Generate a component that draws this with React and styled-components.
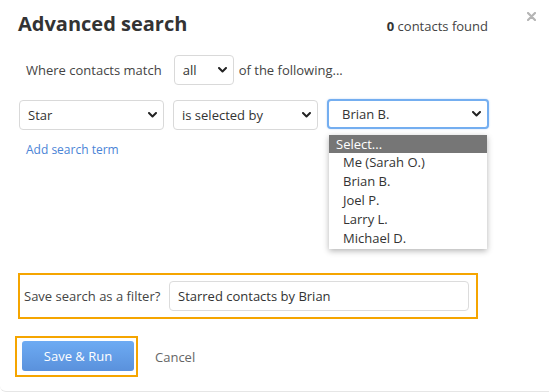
import React from 'react'
import styled, { createGlobalStyle } from 'styled-components'

const GlobalStyle = createGlobalStyle`
  html, body {
    margin: 0;
    padding: 0;
    background: #fff;
  }
  body {
    font-family: "Open Sans", "Liberation Sans", sans-serif;
    color: #444;
  }
  * { box-sizing: border-box; }
`

const people = ['Me (Sarah O.)', 'Brian B.', 'Joel P.', 'Larry L.', 'Michael D.']

const Chevron = () => (
  <svg width="9" height="6" viewBox="0 0 9 6">
    <path d="M1 1 L4.5 4.5 L8 1" fill="none" stroke="#222" strokeWidth="2" strokeLinecap="round" strokeLinejoin="round"/>
  </svg>
)

const CloseIcon = () => (
  <svg width="9" height="9" viewBox="0 0 9 9">
    <path d="M1 1 L8 8 M8 1 L1 8" stroke="#b5b5b5" strokeWidth="2.2" strokeLinecap="round"/>
  </svg>
)

const App = () => {
  return (
    <Modal>
      <GlobalStyle/>
      <Header>
        <Title>Advanced search</Title>
        <Count><b>0</b> contacts found</Count>
        <Close><CloseIcon/></Close>
      </Header>

      <MatchRow>
        <span>Where contacts match</span>
        <SelectBox $width={60}>
          <span>all</span>
          <Chevron/>
        </SelectBox>
        <Following>of the following...</Following>
      </MatchRow>

      <TermRow>
        <SelectBox $width={145}>
          <span>Star</span>
          <Chevron/>
        </SelectBox>
        <SelectBox $width={145}>
          <span>is selected by</span>
          <Chevron/>
        </SelectBox>
        <MenuAnchor>
          <SelectBox $width={162} $focused $indent={13}>
            <span>Brian B.</span>
            <Chevron/>
          </SelectBox>
          <Menu>
            <MenuItem $active>Select...</MenuItem>
            {people.map(p => <MenuItem key={p}>{p}</MenuItem>)}
          </Menu>
        </MenuAnchor>
      </TermRow>

      <AddLink>Add search term</AddLink>

      <FilterBox>
        <span>Save search as a filter?</span>
        <TextInput>Starred contacts by Brian</TextInput>
      </FilterBox>

      <Footer>
        <Highlight>
          <PrimaryButton>Save &amp; Run</PrimaryButton>
        </Highlight>
        <CancelLink>Cancel</CancelLink>
      </Footer>
    </Modal>
  )
}

const Modal = styled.div`
  width: 549px;
  height: 392px;
  background: #fff;
  border-bottom: 1px solid #e6e6e6;
  border-bottom-left-radius: 6px;
  font-size: 13px;
  color: #444;
`

const Header = styled.div`
  display: flex;
  align-items: baseline;
  padding: 9px 13px 0 18px;
  height: 44px;
`

const Title = styled.h1`
  margin: 0;
  font-size: 20px;
  font-weight: 700;
  line-height: 30px;
  color: #333;
`

const Count = styled.div`
  margin-left: auto;
  font-size: 13px;
  color: #444;
  b { font-weight: 700; color: #333; }
`

const Close = styled.div`
  align-self: flex-start;
  margin-left: 39px;
  margin-top: 3px;
  width: 9px;
  height: 9px;
  display: flex;
`

const MatchRow = styled.div`
  display: flex;
  align-items: center;
  padding-left: 26px;
  margin-top: 11px;
  gap: 12px;
`

const Following = styled.span`
  margin-left: -7px;
`

const SelectBox = styled.div`
  width: ${p => p.$width}px;
  height: 30px;
  display: flex;
  align-items: center;
  justify-content: space-between;
  padding: 0 6px 0 ${p => p.$indent || 8}px;
  border: ${p => p.$focused ? '2px solid #74aef0' : '1px solid #d9d9d9'};
  border-radius: 4px;
  background: #fff;
  color: #333;
  font-size: 13px;
  box-shadow: ${p => p.$focused ? '0 0 2px rgba(90,150,230,0.4)' : 'none'};
`

const TermRow = styled.div`
  display: flex;
  gap: 9px;
  padding-left: 19px;
  margin-top: 15px;
`

const MenuAnchor = styled.div`
  position: relative;
  margin-top: -1px;
`

const Menu = styled.div`
  position: absolute;
  top: 36px;
  left: 2px;
  width: 158px;
  background: #fff;
  box-shadow: 0 2px 6px rgba(0,0,0,0.3);
  padding-bottom: 1px;
  z-index: 2;
`

const MenuItem = styled.div`
  height: ${p => p.$active ? 18 : 19}px;
  line-height: ${p => p.$active ? 18 : 19}px;
  padding-left: ${p => p.$active ? 7 : 14}px;
  background: ${p => p.$active ? '#767676' : '#fff'};
  color: ${p => p.$active ? '#fff' : '#333'};
  font-size: 13px;
`

const AddLink = styled.a`
  display: block;
  margin-top: 12px;
  padding-left: 26px;
  font-size: 12px;
  line-height: 16px;
  color: #4a84d6;
  cursor: pointer;
`

const FilterBox = styled.div`
  display: flex;
  align-items: center;
  justify-content: space-between;
  width: 460px;
  height: 46px;
  margin: 115px 0 0 18px;
  padding: 0 7px 0 4px;
  border: 2px solid #f5a500;
  color: #444;
`

const TextInput = styled.div`
  width: 300px;
  height: 30px;
  display: flex;
  align-items: center;
  padding-left: 8px;
  border: 1px solid #dcdcdc;
  border-radius: 4px;
  color: #333;
`

const Footer = styled.div`
  display: flex;
  align-items: center;
  padding-left: 15px;
  margin-top: 17px;
`

const Highlight = styled.div`
  border: 2px solid #f5a500;
  padding: 3px 2px 4px 5px;
`

const PrimaryButton = styled.button`
  width: 112px;
  height: 30px;
  border: none;
  border-radius: 3px;
  background: linear-gradient(#6dabf3, #5a91dc);
  color: #fff;
  font-family: "Open Sans", "Liberation Sans", sans-serif;
  font-size: 13px;
  padding: 0;
  display: block;
`

const CancelLink = styled.span`
  margin-left: 17px;
  color: #666;
`

export default App
